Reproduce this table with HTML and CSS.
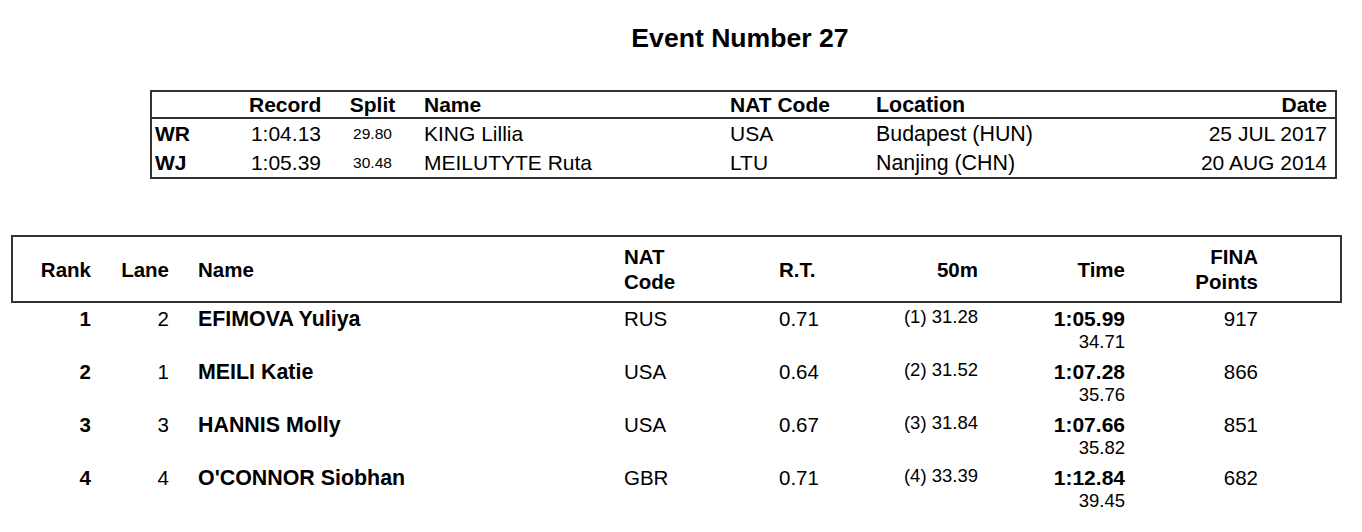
FILE: index.html
```html
<!DOCTYPE html>
<html>
<head>
<meta charset="utf-8">
<link rel="stylesheet" href="styles.css">
</head>
<body>
<div class="page">
  <h1 class="title">Event Number 27</h1>

  <div class="records">
    <div class="rec-row rec-head">
      <div class="r-code"></div>
      <div class="r-rec">Record</div>
      <div class="r-split">Split</div>
      <div class="r-name">Name</div>
      <div class="r-nat">NAT Code</div>
      <div class="r-loc">Location</div>
      <div class="r-date">Date</div>
    </div>
    <div class="rec-row">
      <div class="r-code b">WR</div>
      <div class="r-rec">1:04.13</div>
      <div class="r-split small">29.80</div>
      <div class="r-name">KING Lillia</div>
      <div class="r-nat">USA</div>
      <div class="r-loc">Budapest (HUN)</div>
      <div class="r-date">25 JUL 2017</div>
    </div>
    <div class="rec-row">
      <div class="r-code b">WJ</div>
      <div class="r-rec">1:05.39</div>
      <div class="r-split small">30.48</div>
      <div class="r-name">MEILUTYTE Ruta</div>
      <div class="r-nat">LTU</div>
      <div class="r-loc">Nanjing (CHN)</div>
      <div class="r-date">20 AUG 2014</div>
    </div>
  </div>

  <div class="results">
    <div class="res-row res-head">
      <div class="c-rank">Rank</div>
      <div class="c-lane">Lane</div>
      <div class="c-name">Name</div>
      <div class="c-nat">NAT<br>Code</div>
      <div class="c-rt">R.T.</div>
      <div class="c-split">50m</div>
      <div class="c-time">Time</div>
      <div class="c-pts">FINA<br>Points</div>
    </div>

    <div class="res-row">
      <div class="c-rank b">1</div>
      <div class="c-lane">2</div>
      <div class="c-name b">EFIMOVA Yuliya</div>
      <div class="c-nat">RUS</div>
      <div class="c-rt">0.71</div>
      <div class="c-split"><span class="split">(1) 31.28</span></div>
      <div class="c-time"><span class="b">1:05.99</span><span class="sub">34.71</span></div>
      <div class="c-pts">917</div>
    </div>
    <div class="res-row">
      <div class="c-rank b">2</div>
      <div class="c-lane">1</div>
      <div class="c-name b">MEILI Katie</div>
      <div class="c-nat">USA</div>
      <div class="c-rt">0.64</div>
      <div class="c-split"><span class="split">(2) 31.52</span></div>
      <div class="c-time"><span class="b">1:07.28</span><span class="sub">35.76</span></div>
      <div class="c-pts">866</div>
    </div>
    <div class="res-row">
      <div class="c-rank b">3</div>
      <div class="c-lane">3</div>
      <div class="c-name b">HANNIS Molly</div>
      <div class="c-nat">USA</div>
      <div class="c-rt">0.67</div>
      <div class="c-split"><span class="split">(3) 31.84</span></div>
      <div class="c-time"><span class="b">1:07.66</span><span class="sub">35.82</span></div>
      <div class="c-pts">851</div>
    </div>
    <div class="res-row">
      <div class="c-rank b">4</div>
      <div class="c-lane">4</div>
      <div class="c-name b">O'CONNOR Siobhan</div>
      <div class="c-nat">GBR</div>
      <div class="c-rt">0.71</div>
      <div class="c-split"><span class="split">(4) 33.39</span></div>
      <div class="c-time"><span class="b">1:12.84</span><span class="sub">39.45</span></div>
      <div class="c-pts">682</div>
    </div>
  </div>
</div>
</body>
</html>
```

FILE: styles.css
```css
* { box-sizing: border-box; }
html, body { margin: 0; padding: 0; background: #fff; }
body {
  font-family: "Liberation Sans", Arial, sans-serif;
  color: #000;
  width: 1362px;
  height: 532px;
  overflow: hidden;
}
.page {
  display: flex;
  flex-direction: column;
}
.b { font-weight: bold; }

.title {
  margin: 22px 0 0 0;
  height: 68px;
  font-size: 26.6px;
  line-height: 32px;
  font-weight: bold;
  text-align: center;
  padding-left: 118px;
}

/* record table */
.records {
  margin-left: 150px;
  width: 1187px;
  border: 2px solid #333;
  font-size: 21px;
}
.rec-row {
  display: grid;
  grid-template-columns: 97px 72px 103px 306px 146px 1fr 220px;
  height: 29px;
  align-items: center;
  line-height: 24px;
}
.rec-head {
  height: 27px;
  font-weight: bold;
  border-bottom: 2px solid #333;
}
.r-code { padding-left: 3px; }
.r-rec { text-align: right; }
.r-split { text-align: center; }
.r-loc { font-size: 21.4px; }
.r-date { text-align: right; padding-right: 8px; }
.small { font-size: 15.5px; }

/* results table */
.results {
  margin-top: 56px;
  margin-left: 11px;
  width: 1331px;
  font-size: 20.5px;
}
.res-row {
  display: grid;
  grid-template-columns: 78px 78px 456px 154px 100px 99px 146px 134px 1fr;
  height: 53px;
  padding-top: 4px;
  padding-left: 2px;
  line-height: 24px;
  align-items: start;
}
.res-head {
  height: 68px;
  padding-top: 0;
  padding-left: 0;
  align-items: center;
  font-weight: bold;
  border: 2px solid #333;
  line-height: 25px;
}
.c-rank, .c-lane, .c-split, .c-time, .c-pts { text-align: right; }
.c-name { padding-left: 29px; }
.res-row .c-name.b { font-size: 21.4px; }
.c-nat { margin-left: -1px; }
.c-time { display: flex; flex-direction: column; align-items: flex-end; margin-right: -1px; }
.c-time .b { font-size: 21px; }
.split { font-size: 18.5px; line-height: 20px; display: block; }
.sub { font-size: 18.5px; line-height: 22px; }
```
